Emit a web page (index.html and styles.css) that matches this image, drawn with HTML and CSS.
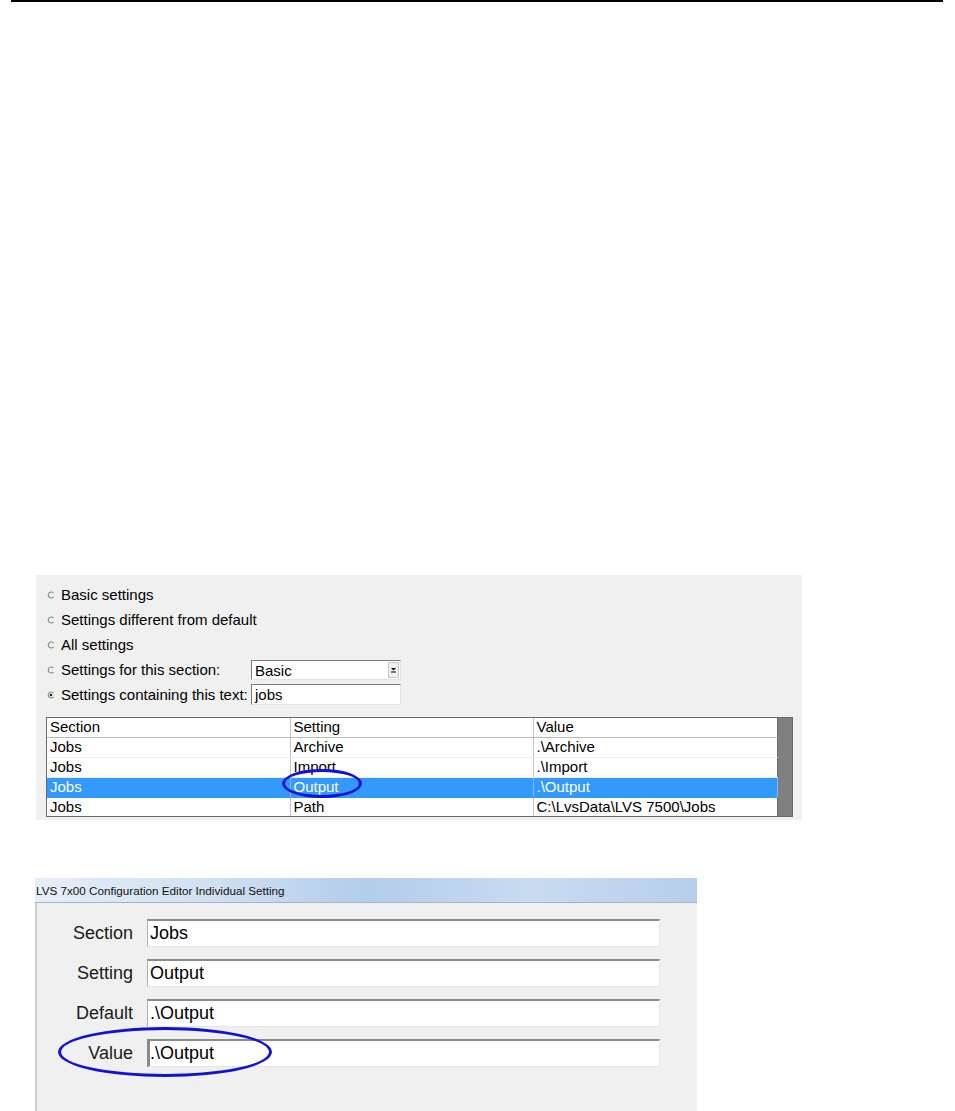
FILE: index.html
```html
<!DOCTYPE html>
<html lang="en">

<head>
    <meta charset="UTF-8">
    <title>Configuration Editor</title>
    <link rel="stylesheet" href="styles.css">
</head>

<body>
    <div class="rule"></div>

    <!-- filter + list -->
    <div class="shot filter">
        <div class="opts">
            <div class="opt">
                <svg class="radio" width="8" height="8" viewBox="0 0 8 8"><path d="M6.5 2A3 3 0 1 0 6.5 6" fill="none" stroke="#8c8c8c" stroke-width="1.2"/></svg>
                Basic settings
            </div>
            <div class="opt">
                <svg class="radio" width="8" height="8" viewBox="0 0 8 8"><path d="M6.5 2A3 3 0 1 0 6.5 6" fill="none" stroke="#8c8c8c" stroke-width="1.2"/></svg>
                Settings different from default
            </div>
            <div class="opt">
                <svg class="radio" width="8" height="8" viewBox="0 0 8 8"><path d="M6.5 2A3 3 0 1 0 6.5 6" fill="none" stroke="#8c8c8c" stroke-width="1.2"/></svg>
                All settings
            </div>
            <div class="opt">
                <svg class="radio" width="8" height="8" viewBox="0 0 8 8"><path d="M6.5 2A3 3 0 1 0 6.5 6" fill="none" stroke="#8c8c8c" stroke-width="1.2"/></svg>
                <span class="opt-label">Settings for this section:</span>
                <div class="combo">
                    <span>Basic</span>
                    <b class="combo-btn"><svg width="7" height="6" viewBox="0 0 7 6"><path d="M1 1h5L3.5 3.5z" fill="#000"/><path d="M1 5h5" stroke="#000" stroke-width="1"/></svg></b>
                </div>
            </div>
            <div class="opt">
                <svg class="radio" width="8" height="8" viewBox="0 0 8 8"><path d="M6.5 2A3 3 0 1 0 6.5 6" fill="none" stroke="#8c8c8c" stroke-width="1.2"/><circle cx="4" cy="4" r="1.3" fill="#222"/></svg>
                <span class="opt-label">Settings containing this text:</span>
                <div class="field">jobs</div>
            </div>
        </div>

        <div class="list">
            <table>
                <tr class="head">
                    <td>Section</td>
                    <td>Setting</td>
                    <td>Value</td>
                </tr>
                <tr>
                    <td>Jobs</td>
                    <td>Archive</td>
                    <td>.\Archive</td>
                </tr>
                <tr>
                    <td>Jobs</td>
                    <td>Import</td>
                    <td>.\Import</td>
                </tr>
                <tr class="sel">
                    <td>Jobs</td>
                    <td>Output</td>
                    <td>.\Output</td>
                </tr>
                <tr>
                    <td>Jobs</td>
                    <td>Path</td>
                    <td>C:\LvsData\LVS 7500\Jobs</td>
                </tr>
            </table>
        </div>

        <span class="ring ring-output"></span>
    </div>

    <!-- single setting dialog -->
    <div class="shot dialog">
        <div class="titlebar">LVS 7x00 Configuration Editor Individual Setting</div>
        <div class="dialog-body">
            <div class="form">
                <label>Section</label>
                <div class="box">Jobs</div>
                <label>Setting</label>
                <div class="box">Output</div>
                <label>Default</label>
                <div class="box">.\Output</div>
                <label>Value</label>
                <div class="box focus">.\Output</div>
            </div>
        </div>
        <span class="ring ring-value"></span>
    </div>
</body>

</html>
```

FILE: styles.css
```css
* {
    margin: 0;
    padding: 0;
    box-sizing: border-box;
}

body {
    background: #fff;
    font-family: "Liberation Sans", Arial, sans-serif;
    color: #000;
}

.rule {
    width: 932px;
    height: 2px;
    margin-left: 11px;
    background: #000;
}

.shot {
    position: relative;
    background: #f0f0f0;
}

/* 上面那张 */
.filter {
    width: 766px;
    height: 245px;
    margin: 573px 0 0 36px;
    font-size: 15px;
}

.opts {
    padding: 7px 0 0 11px;
}

.opt {
    display: flex;
    align-items: center;
    height: 25px;
}

.radio {
    flex: none;
    margin-right: 6px;
}

.opt-label {
    width: 190px;
    flex: none;
}

.combo,
.field {
    width: 150px;
    height: 21px;
    background: #fff;
    border-top: 1px solid #7a7a7a;
    border-left: 1px solid #7a7a7a;
    border-right: 1px solid #e3e3e3;
    border-bottom: 1px solid #e3e3e3;
    padding-left: 3px;
    line-height: 19px;
}

.combo {
    display: flex;
    justify-content: space-between;
    height: 20px;
}

.combo-btn {
    width: 11px;
    margin: 1px 1px 1px 0;
    background: #f0f0f0;
    border: 1px solid #c8c8c8;
    display: flex;
    align-items: center;
    justify-content: center;
}

.list {
    width: 747px;
    height: 100px;
    margin: 10px 0 0 10px;
    border: 1px solid #6a6a6a;
    background: #808080;
    overflow: hidden;
}

.list table {
    width: 731px;
    border-collapse: collapse;
    background: #fff;
    table-layout: fixed;
}

.list td {
    height: 20px;
    padding: 0 3px;
    border-right: 1px solid #c4c4c4;
    border-bottom: 1px solid #ececec;
    white-space: nowrap;
    line-height: 18px;
}

.list td:first-child {
    width: 243px;
}

.list td:nth-child(2) {
    width: 243px;
}

.list td:last-child {
    border-right: 1px solid #6a6a6a;
}

.list .head td {
    height: 19px;
    border-bottom: 1px solid #b8b8b8;
}

.list .sel td {
    background: #3399ff;
    color: #fff;
    border-color: #3399ff;
    border-right-color: #7fb9f5;
}

.ring {
    position: absolute;
    border: 3px solid #1212d4;
    border-radius: 50%;
}

.ring-output {
    left: 246px;
    top: 194px;
    width: 80px;
    height: 29px;
}

/* 下面那张 */
.dialog {
    width: 662px;
    height: 233px;
    margin: 58px 0 0 35px;
}

.titlebar {
    height: 25px;
    padding-left: 1px;
    line-height: 25px;
    font-size: 11.7px;
    color: #111;
    background: linear-gradient(to right, #e6eef8 0%, #d3e1f1 25%, #b3cdec 50%, #c8dbf1 75%, #b7cfeb 100%);
    border-bottom: 1px solid #9fb4cb;
}

.dialog-body {
    height: 208px;
    border-left: 2px solid #c9ced6;
    padding-top: 16px;
}

.form {
    display: grid;
    grid-template-columns: 96px 513px;
    grid-auto-rows: 28px;
    column-gap: 14px;
    row-gap: 12px;
    font-size: 18px;
}

.form label {
    display: flex;
    align-items: center;
    justify-content: flex-end;
    color: #1a1a1a;
}

.box {
    background: #fff;
    border-top: 2px solid #8a8a8a;
    border-left: 1px solid #b0b0b0;
    border-right: 1px solid #e6e6e6;
    border-bottom: 1px solid #e6e6e6;
    padding-left: 2px;
    line-height: 24px;
    color: #000;
}

.box.focus {
    border-left: 3px solid #8a8a8a;
    padding-left: 0;
}

.ring-value {
    left: 23px;
    top: 149px;
    width: 214px;
    height: 50px;
}
```
